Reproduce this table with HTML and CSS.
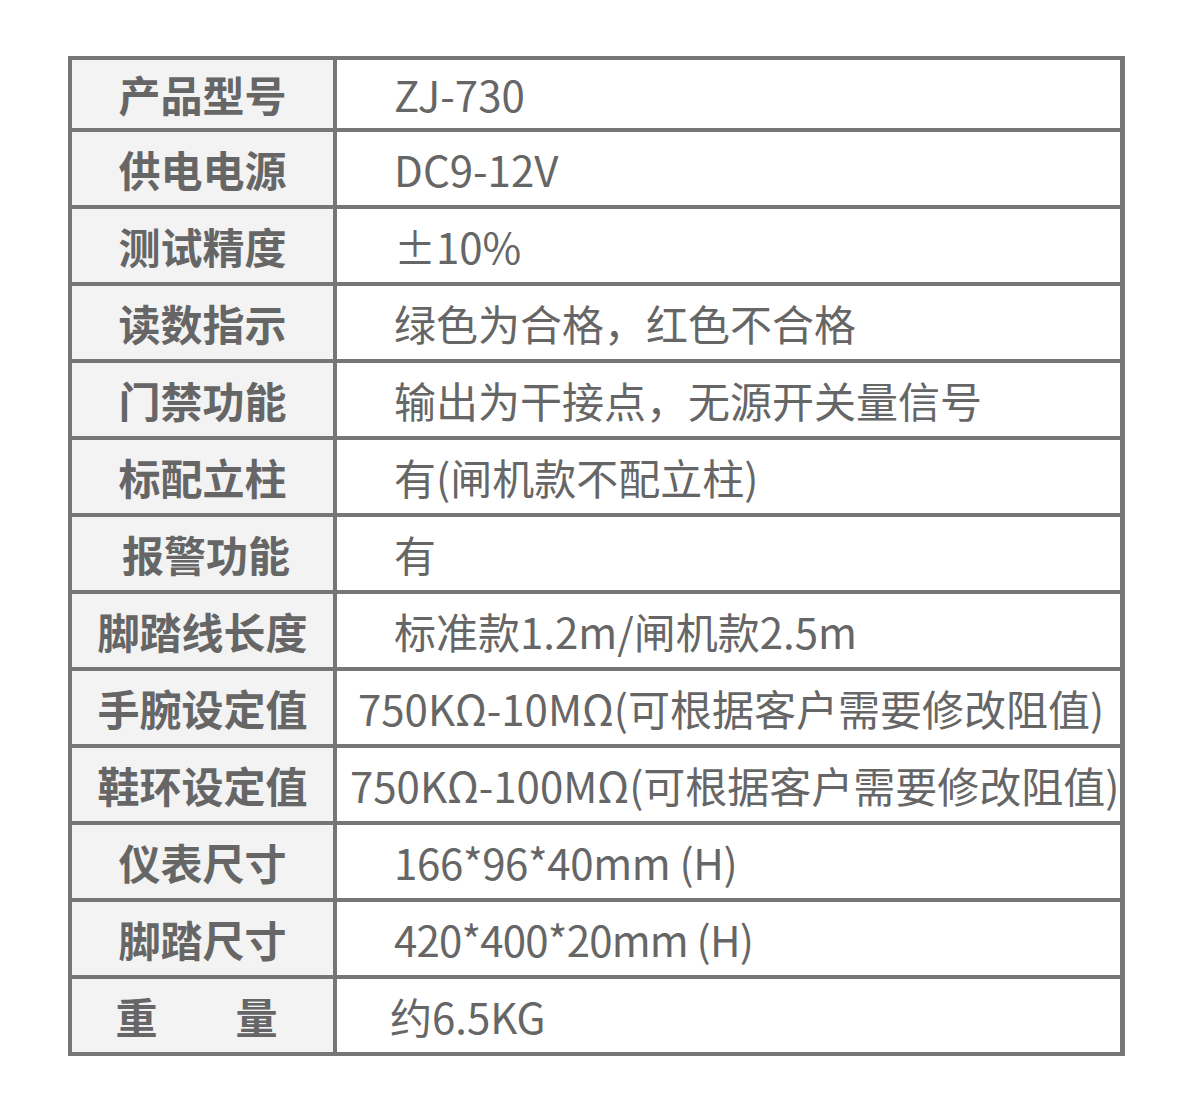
FILE: index.html
```html
<!DOCTYPE html>
<html lang="zh-CN">
<head>
<meta charset="utf-8">
<title>产品参数</title>
<link rel="stylesheet" href="styles.css">
</head>
<body>
<div class="page">
<table class="spec">
<tbody>
<tr class="first"><td class="label">产品型号</td><td class="value">ZJ-730</td></tr>
<tr><td class="label">供电电源</td><td class="value">DC9-12V</td></tr>
<tr><td class="label">测试精度</td><td class="value">±10%</td></tr>
<tr><td class="label">读数指示</td><td class="value">绿色为合格，红色不合格</td></tr>
<tr><td class="label">门禁功能</td><td class="value">输出为干接点，无源开关量信号</td></tr>
<tr><td class="label">标配立柱</td><td class="value">有(闸机款不配立柱)</td></tr>
<tr><td class="label label-shift">报警功能</td><td class="value">有</td></tr>
<tr><td class="label">脚踏线长度</td><td class="value">标准款1.2m/闸机款2.5m</td></tr>
<tr><td class="label">手腕设定值</td><td class="value value-wide">750KΩ-10MΩ(可根据客户需要修改阻值)</td></tr>
<tr><td class="label">鞋环设定值</td><td class="value value-wider">750KΩ-100MΩ(可根据客户需要修改阻值)</td></tr>
<tr><td class="label">仪表尺寸</td><td class="value value-tight">166*96*40mm (H)</td></tr>
<tr><td class="label">脚踏尺寸</td><td class="value value-tighter">420*400*20mm (H)</td></tr>
<tr><td class="label"><span class="spread"><span>重</span><span>量</span></span></td><td class="value value-last">约6.5KG</td></tr>
</tbody>
</table>
</div>
</body>
</html>
```
FILE: styles.css
```css
html, body {
  margin: 0;
  padding: 0;
  background: #ffffff;
}

.page {
  padding: 56px 0 0 68px;
}

.spec {
  border-collapse: separate;
  border-spacing: 0;
  border-top: 4px solid #767676;
  border-left: 4px solid #767676;
  font-family: "Noto Sans CJK SC", "Noto Sans", sans-serif;
  font-size: 42px;
  color: #666666;
}

.spec td {
  border-right: 4px solid #767676;
  border-bottom: 4px solid #767676;
  height: 73px;
  padding: 0;
  box-sizing: content-box;
  white-space: nowrap;
  vertical-align: middle;
  line-height: 1;
}

.spec tr.first td {
  height: 68px;
}

.spec td.label {
  width: 261px;
  background: #f3f3f3;
  font-weight: 700;
  text-align: center;
}

.spec td.label-shift {
  padding-left: 7px;
  width: 254px;
}

.spec td.value {
  width: 720px;
  background: #ffffff;
  font-weight: 400;
  padding-left: 57px;
  border-right-width: 5px;
}

.spec td.value-wide {
  padding-left: 21px;
  width: 756px;
}

.spec td.value-wider {
  padding-left: 13px;
  width: 764px;
}

.spec td.value-tight {
  letter-spacing: -0.35px;
}

.spec td.value-tighter {
  letter-spacing: -0.8px;
}

.spec td.value-last {
  padding-left: 53px;
  width: 724px;
}

.spread {
  display: inline-flex;
  gap: 78px;
  margin-left: -12px;
}
```
